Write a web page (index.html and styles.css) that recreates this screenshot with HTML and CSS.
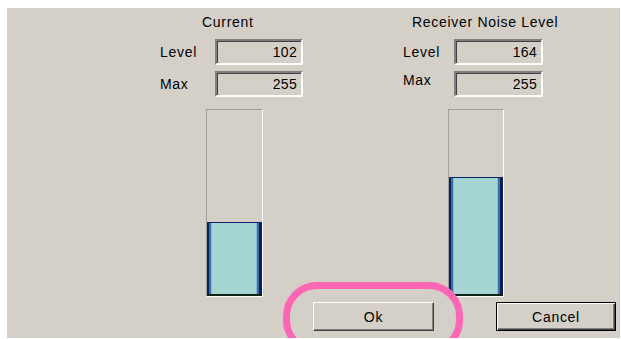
FILE: index.html
```html
<!DOCTYPE html>
<html lang="en">
<head>
<meta charset="UTF-8">
<meta name="viewport" content="width=device-width, initial-scale=1.0">
<title>Signal Level</title>
<link rel="stylesheet" href="styles.css">
</head>
<body>
<div class="dialog">
  <div class="columns">
    <div class="column column-current">
      <h2 class="heading">Current</h2>
      <div class="fields">
        <label for="cur-level">Level</label>
        <input type="text" id="cur-level" value="102" readonly>
        <label for="cur-max">Max</label>
        <input type="text" id="cur-max" value="255" readonly>
      </div>
      <div class="meter">
        <div class="meter-fill" style="height: 74px"></div>
      </div>
    </div>

    <div class="column column-noise">
      <h2 class="heading">Receiver Noise Level</h2>
      <div class="fields">
        <label for="noise-level">Level</label>
        <input type="text" id="noise-level" value="164" readonly>
        <label for="noise-max" class="label-top">Max</label>
        <input type="text" id="noise-max" value="255" readonly>
      </div>
      <div class="meter">
        <div class="meter-fill" style="height: 119px"></div>
      </div>
    </div>
  </div>

  <div class="buttons">
    <button type="button" class="btn">Ok</button>
    <button type="button" class="btn btn-default">Cancel</button>
  </div>

  <!-- annotation ring round the Ok button -->
  <div class="highlight"></div>
</div>
</body>
</html>
```

FILE: styles.css
```css
* {
margin: 0;
padding: 0;
box-sizing: border-box;
}
html, body {
background: #fff;
overflow: hidden;
}
body {
padding: 8px 1px 0 7px;
font-family: "Liberation Sans", Arial, sans-serif;
font-size: 14px;
letter-spacing: 0.7px;
color: #000;
}
.dialog {
position: relative;
height: 330px;
background: #d4d0c8;
padding: 6px 4px 0 0;
}
.columns {
display: flex;
padding-left: 153px;
gap: 100px;
}
.column {
display: flex;
flex-direction: column;
}
.heading {
font-size: 14px;
font-weight: normal;
line-height: 16px;
height: 16px;
}
.column-current .heading {
padding-left: 42px;
}
.column-noise .heading {
padding-left: 9px;
}
.fields {
display: grid;
grid-template-columns: 55px 88px;
grid-auto-rows: 26px;
row-gap: 6px;
margin-top: 9px;
align-items: center;
}
.column-noise .fields {
grid-template-columns: 51px 89px;
}
.fields label {
line-height: 16px;
}
.fields .label-top {
align-self: start;
margin-top: 1px;
}
.fields input {
width: 100%;
height: 26px;
font: inherit;
letter-spacing: 0.3px;
text-align: right;
padding: 0 4px 0 4px;
background: #d4d0c8;
color: #000;
border-style: solid;
border-width: 2px;
border-color: #808080 #fff #fff #808080;
box-shadow: inset 1px 1px 0 #404040;
outline: none;
}
.meter {
display: flex;
flex-direction: column;
justify-content: flex-end;
width: 57px;
height: 188px;
margin-top: 12px;
margin-left: 46px;
border: 1px solid;
border-color: #a0a0a0 #fff #fff #a0a0a0;
}
.column-noise .meter {
width: 56px;
margin-left: 45px;
}
.meter-fill {
border-top: 1px solid #0a246a;
border-bottom: 2px solid #0c2418;
background: linear-gradient(to right,
  #0a1f5c 0, #0a1f5c 2px,
  #3a6ea5 2px, #3a6ea5 4px,
  #8cb8d8 4px, #8cb8d8 5px,
  #a6d6d3 5px, #a6d6d3 calc(100% - 6px),
  #8cb8d8 calc(100% - 6px), #8cb8d8 calc(100% - 5px),
  #3a6ea5 calc(100% - 5px), #3a6ea5 calc(100% - 3px),
  #0a1f5c calc(100% - 3px));
}
.buttons {
display: flex;
justify-content: flex-end;
gap: 62px;
margin-top: 5px;
}
.btn {
height: 29px;
width: 121px;
font: inherit;
letter-spacing: 0.7px;
background: #d4d0c8;
color: #000;
border: 1px solid;
border-color: #fff #404040 #404040 #fff;
box-shadow: inset -1px -1px 0 #808080;
}
.btn-default {
width: 120px;
border: 1px solid #000;
box-shadow: inset 1px 1px 0 #fff, inset -1px -1px 0 #404040, inset -2px -2px 0 #808080;
}
.highlight {
position: absolute;
left: 276px;
top: 274px;
width: 180px;
height: 72px;
border: 7px solid #fd66b5;
border-radius: 34px;
pointer-events: none;
}
```
